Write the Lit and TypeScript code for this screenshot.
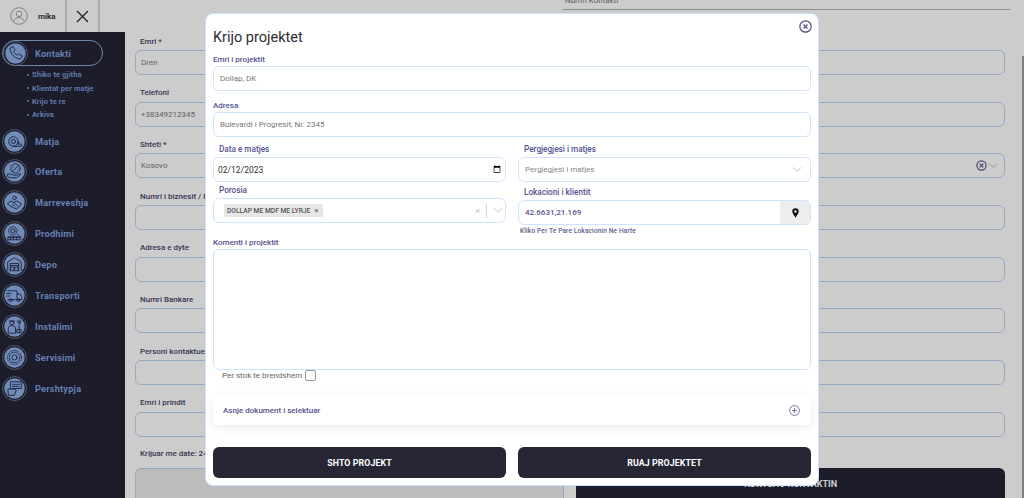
import { LitElement, html, css, svg } from "lit";
import { customElement } from "lit/decorators.js";

const glyphs: Record<string, unknown> = {
  Kontakti: svg`<path d="M7.6 6.4l2-1 2 3.2-1.3 1.3c.5 1.6 1.8 2.9 3.6 3.7l1.3-1.3 3.2 2-1 2.1c-.4.7-1.2 1-2 .8C10.800 16.100 7.800 13 6.700 8.400c-.2-.8.2-1.600.9-2z" />`,
  Matja: svg`<circle cx="11" cy="12" r="4.600"/><circle cx="11" cy="12" r="2"/><path d="M11 16.600h7.500v-2.200h-2.500M15.600 12.500v1.900"/>`,
  Oferta: svg`<circle cx="13" cy="9" r="4.500"/><path d="M10 12l6-6M11.300 7.800h.1M14.700 10.300h.1M5.500 14.500h3l2.500 1h3l3-1.500c.8-.3 1.300.6.600 1.200L14 18H8l-2.500-1z"/>`,
  Marreveshja: svg`<circle cx="12" cy="7.500" r="1.700"/><path d="M5.500 13l3-2.500 3 1.500 2.500-1.500 4.500 2.500-2 3-2.500 2-3-1-3.500-2zM10 13.500l2 2M12 12.500l2.500 2.500"/>`,
  Prodhimi: svg`<circle cx="10.500" cy="9.500" r="2"/><circle cx="10.500" cy="9.500" r="4" stroke-dasharray="1.600 1"/><path d="M15 13l3 2.500H6M6 15.500h12v2.500H6z"/><path d="M8 18v-2.500M11 18v-2.500M14 18v-2.500"/>`,
  Depo: svg`<path d="M5.500 18V9.500L12 5.500l6.500 4V18M8 18v-7h8v7M8 13h8"/><rect x="8.500" y="14.500" width="3" height="3.500"/><rect x="12.500" y="14.500" width="3" height="3.500"/>`,
  Transporti: svg`<path d="M5.500 7.500h9v8.500h-9M14.500 10.500h2.700l1.800 2.500v3h-4.500"/><circle cx="8.300" cy="16.500" r="1.400"/><circle cx="15.800" cy="16.500" r="1.400"/><path d="M4.500 10h4M4.500 12.500h3"/>`,
  Instalimi: svg`<circle cx="9.500" cy="8.500" r="2"/><path d="M6 18v-4.500c0-1.500 1.500-2.200 3.500-2.200s3.500.7 3.500 2.200V18zM7 6.800h5"/><path d="M16.500 6v3.500M15 6.500c0 1.500.7 2.500 1.500 3 .8-.5 1.500-1.500 1.500-3M16.500 11v7M14.500 15h4v3h-4z"/>`,
  Servisimi: svg`<circle cx="12" cy="12" r="2.500"/><circle cx="12" cy="12" r="5" stroke-dasharray="2 1.200"/><circle cx="12" cy="12" r="6.700" stroke-dasharray="1 1.500"/>`,
  Pershtypja: svg`<rect x="8.500" y="5.500" width="10" height="6.500"/><path d="M10 8h1M12 8h1M14 8h1M16 8h1M10 10h6M6 12.500h6.500l1 1.500-1.500 4.500H6.500z"/>`,
};

const navItems = ["Matja", "Oferta", "Marreveshja", "Prodhimi", "Depo", "Transporti", "Instalimi", "Servisimi", "Pershtypja"];
const subItems = ["Shiko te gjitha", "Klientat per matje", "Krijo te re", "Arkiva"];
const leftFields = [
  ["Emri *", "Dren"],
  ["Telefoni", "+38349212345"],
  ["Shteti *", "Kosovo"],
  ["Numri i biznesit / Personal", ""],
  ["Adresa e dyte", ""],
  ["Numri Bankare", ""],
  ["Personi kontaktues", ""],
  ["Emri i prindit", ""],
];

const navIcon = (name: string) => html`
  <svg class="nav-icon" viewBox="0 0 24 24" aria-hidden="true">
    <circle class="ring" cx="12" cy="12" r="11.500" />
    <circle class="disc" cx="12" cy="12" r="9.800" />
    <g class="glyph">${glyphs[name]}</g>
  </svg>`;

const chevron = html`<svg class="chev" viewBox="0 0 12 8" aria-hidden="true"><path d="M1 1.500l5 4.500 5-4.500" /></svg>`;

@customElement("app-root")
export class AppRoot extends LitElement {
  static styles = css`
    :host {
      display: block;
      position: relative;
      width: 1024px;
      height: 498px;
      overflow: hidden;
      background: #fff;
      font-family: Roboto, "Liberation Sans", sans-serif;
      color: #54528f;
    }
    * { box-sizing: border-box; }
    .page { display: grid; grid-template-columns: 125px 1fr; grid-template-rows: 32px 1fr; height: 498px; }
    .top { grid-column: 1 / 3; display: flex; height: 32px; position: relative; }
    .user { width: 67px; display: flex; align-items: center; gap: 10px; padding-left: 10px; border-right: 2px solid #d8d8d8; }
    .user svg { width: 18px; height: 18px; flex: none; }
    .user span { font-size: 8px; font-weight: 700; color: #333; }
    .x { width: 33px; display: flex; align-items: center; justify-content: center; border-right: 2px solid #d8d8d8; }
    .x svg { width: 13px; height: 13px; }
    .top-right { margin-left: 462px; width: 448px; height: 10px; border-bottom: 1px solid #b5b5b5; font-size: 8px; line-height: 1px; color: #777; display: flex; justify-content: space-between; padding: 0 3px; }
    .side { background: #232335; padding: 8px 0 0 2px; display: flex; flex-direction: column; }
    .pill { width: 101px; height: 26px; border: 1px solid #8faad4; border-radius: 13px; display: flex; align-items: center; gap: 7px; }
    .name { font-size: 9.200px; font-weight: 700; color: #7e9fdc; letter-spacing: 0.200px; }
    .nav-icon { width: 25px; height: 25px; flex: none; }
    .ring { fill: none; stroke: #7f8ca8; stroke-width: 0.700; }
    .disc { fill: #8db0e8; }
    .glyph { fill: none; stroke: #232845; stroke-width: 0.850; stroke-linejoin: round; stroke-linecap: round; }
    .subs { list-style: none; margin: 2px 0 7px 25px; padding: 0; display: flex; flex-direction: column; }
    .subs li { height: 13.400px; display: flex; align-items: center; gap: 3px; font-size: 7.500px; font-weight: 600; color: #7e9fdc; letter-spacing: 0.100px; }
    .subs li::before { content: ""; width: 2px; height: 2px; border-radius: 50%; background: #7e9fdc; }
    .nav { display: flex; flex-direction: column; gap: 5.900px; }
    .nav-row { height: 25px; display: flex; align-items: center; gap: 8px; }
    .form { padding: 0 19px 0 10px; display: grid; grid-template-columns: 429px 429px; column-gap: 12px; align-content: start; position: relative; }
    .col { display: flex; flex-direction: column; padding-top: 4px; }
    .f { height: 51.700px; display: flex; flex-direction: column; }
    .f label { height: 14px; padding: 0 0 4px 5px; font-size: 8px; font-weight: 500; color: #45456b; display: flex; align-items: center; white-space: nowrap; }
    .box { height: 25px; border: 1px solid #bcd2f5; border-radius: 6px; display: flex; align-items: center; justify-content: space-between; padding: 0 6px 0 5px; font-size: 8px; color: #7a7a7a; }
    .created { font-size: 8px; font-weight: 500; color: #45456b; height: 16px; margin-top: -1px; padding-left: 5px; }
    .grey-box { height: 40px; border: 1px solid #bcd2f5; border-radius: 6px; background: #ececec; margin-top: 3px; }
    .big-btn { height: 40px; background: #232335; border-radius: 6px; color: #fff; font-size: 9px; font-weight: 700; display: flex; justify-content: center; padding-top: 11px; margin-top: 18px; }
    .mini-x { width: 11px; height: 11px; stroke-width: 1.300; }
    .box-right { display: flex; align-items: center; gap: 1px; }
    .bar { position: absolute; right: 0; top: 24px; bottom: 0; width: 2px; background: #a0a0a0; }

    .overlay { position: absolute; inset: 0; background: rgba(0, 0, 0, 0.2); }
    .modal {
      position: absolute; left: 205px; top: 13px; width: 614px; height: 473px;
      background: #fff; border: 1px solid #cfe2ff; border-radius: 8px;
      padding: 6px 7px 0 7px; display: flex; flex-direction: column;
    }
    .m-head { display: flex; justify-content: flex-end; height: 9px; margin-right: -1px; }
    .m-head svg { width: 13px; height: 13px; flex: none; }
    h1 { margin: 0; font-size: 14.500px; font-weight: 400; color: #2c2c33; line-height: 18px; height: 18px; }
    .m-label { display: block; height: 12px; font-size: 8px; font-weight: 500; color: #54528f; line-height: 12px; white-space: nowrap; }
    .m-input { display: block; width: 100%; height: 25px; border: 1px solid #cfe2ff; border-radius: 6px; padding: 0 6px; font: 400 8px Roboto, sans-serif; color: #777; background: #fff; outline: none; }
    .f1 { margin-top: 7px; }
    .f2 { margin-top: 9px; }
    .grid { display: grid; grid-template-columns: 293px 293px; column-gap: 12px; margin-top: 5px; }
    .c { display: flex; flex-direction: column; }
    .c .m-label { padding-left: 6px; height: 15px; line-height: 14px; font-size: 8.200px; }
    .c .m-label.l-por { margin-top: 1px; }
    .c .m-label.l-loc { margin-top: 3px; }
    .date { color: #333; font-size: 8.500px; padding: 0 2px 0 4px; }
    .date::-webkit-datetime-edit-text { padding: 0; }
    .date::-webkit-datetime-edit-month-field,
    .date::-webkit-datetime-edit-day-field,
    .date::-webkit-datetime-edit-year-field { padding: 0; }
    .select { display: flex; align-items: center; justify-content: space-between; padding: 0 8px 0 6px; color: #888; }
    .chev { width: 10px; height: 7px; fill: none; stroke: #b9b9b9; stroke-width: 1; }
    .porosia { display: flex; align-items: center; padding: 0 2px 0 10px; }
    .tag { height: 13px; background: #e6e6e6; border-radius: 2px; padding: 0 4px 0 3px; display: flex; align-items: center; gap: 4px; font-size: 6.700px; font-weight: 500; color: #555; white-space: nowrap; }
    .tag b { font-weight: 400; font-size: 8px; }
    .porosia .tools { margin-left: auto; display: flex; align-items: center; gap: 6px; color: #c4c4c4; font-size: 9px; }
    .porosia .sep { width: 1px; height: 14px; background: #d4d4d4; }
    .loc { display: flex; height: 25px; border: 1px solid #cfe2ff; border-radius: 6px; overflow: hidden; }
    .loc span { flex: 1; display: flex; align-items: center; padding-left: 6px; font-size: 8px; font-weight: 500; color: #54528f; }
    .loc i { width: 30px; background: #ededed; display: flex; align-items: center; justify-content: center; }
    .loc svg { width: 7px; height: 10px; }
    .hint { font-size: 6.500px; font-weight: 500; padding-left: 2px; color: #5c5c8c; margin-top: 2px; letter-spacing: 0.150px; line-height: 9px; }
    .kom { margin-top: 1px; }
    .ta { height: 121px; border: 1px solid #cfe2ff; border-radius: 6px; }
    .stock { display: flex; align-items: center; gap: 3px; padding-left: 9px; height: 11px; font-size: 8px; color: #666; }
    .check { width: 11px; height: 11px; border: 1px solid #999; border-radius: 2px; }
    .doc { margin-top: 14px; height: 30px; border-radius: 6px; box-shadow: 0 3px 8px rgba(90, 100, 130, 0.12); display: flex; align-items: center; justify-content: space-between; padding: 0 11px 0 10px; font-size: 8px; font-weight: 500; color: #54528f; }
    .doc svg { width: 11px; height: 11px; }
    .actions { margin-top: 22px; display: grid; grid-template-columns: 293px 293px; column-gap: 12px; }
    .actions button { height: 31px; border: 0; border-radius: 6px; background: #262635; color: #fff; font: 700 8.800px Roboto, sans-serif; letter-spacing: 0.100px; }
  `;

  render() {
    return html`
      <div class="page">
        <header class="top">
          <div class="user">
            <svg viewBox="0 0 18 18" fill="none" stroke="#8c8c8c" stroke-width="0.800" aria-hidden="true">
              <circle cx="9" cy="9" r="8.300" /><circle cx="9" cy="6.800" r="2.800" />
              <path d="M3.800 14.500c.6-2.700 2.600-3.900 5.200-3.900s4.600 1.200 5.200 3.900" />
            </svg>
            <span>mika</span>
          </div>
          <div class="x">
            <svg viewBox="0 0 13 13" stroke="#222" stroke-width="1.200" aria-hidden="true"><path d="M1 1l11 11M12 1L1 12" /></svg>
          </div>
          <div class="top-right"><span>Numri Kontakti</span></div>
        </header>
        <aside class="side">
          <div class="pill">${navIcon("Kontakti")}<span class="name">Kontakti</span></div>
          <ul class="subs">${subItems.map((s) => html`<li>${s}</li>`)}</ul>
          <nav class="nav">
            ${navItems.map((n) => html`<div class="nav-row">${navIcon(n)}<span class="name">${n}</span></div>`)}
          </nav>
        </aside>
        <main class="form">
          <div class="col">
            ${leftFields.map(([l, v]) => html`<div class="f"><label>${l}</label><div class="box">${v}</div></div>`)}
            <div class="created">Krijuar me date: 24/11/2023</div>
            <div class="grey-box"></div>
          </div>
          <div class="col">
            ${[0, 1].map(() => html`<div class="f"><label></label><div class="box"></div></div>`)}
            <div class="f"><label></label><div class="box"><span></span><span class="box-right">
              <svg class="mini-x" viewBox="0 0 12 12" fill="none" stroke="#54528f" aria-hidden="true"><circle cx="6" cy="6" r="5" /><path d="M4 4l4 4M8 4l-4 4" /></svg>${chevron}
            </span></div></div>
            ${[0, 1, 2, 3, 4].map(() => html`<div class="f"><label></label><div class="box"></div></div>`)}
            <div class="big-btn">NDRYSHO KONTAKTIN</div>
          </div>
          <div class="bar"></div>
        </main>
      </div>
      <div class="overlay"></div>
      <section class="modal">
        <div class="m-head">
          <svg viewBox="0 0 13 13" fill="none" stroke="#4f4d85" stroke-width="1.200" aria-hidden="true"><circle cx="6.500" cy="6.500" r="5.700" /><path d="M4.500 4.500l4 4M8.500 4.500l-4 4" /></svg>
        </div>
        <h1>Krijo projektet</h1>
        <div class="f1"><label class="m-label">Emri i projektit</label><input class="m-input" .value=${"Dollap, DK"} /></div>
        <div class="f2"><label class="m-label">Adresa</label><input class="m-input" .value=${"Bulevardi i Progresit, Nr. 2345"} /></div>
        <div class="grid">
          <div class="c">
            <label class="m-label">Data e matjes</label>
            <input class="m-input date" type="date" value="2023-02-12" />
            <label class="m-label l-por">Porosia</label>
            <div class="m-input porosia">
              <span class="tag">DOLLAP ME MDF ME LYRJE <b>×</b></span>
              <span class="tools"><span>×</span><span class="sep"></span>${chevron}</span>
            </div>
          </div>
          <div class="c">
            <label class="m-label">Pergjegjesi i matjes</label>
            <div class="m-input select"><span>Pergjegjesi i matjes</span>${chevron}</div>
            <label class="m-label l-loc">Lokacioni i klientit</label>
            <div class="loc"><span>42.6631,21.169</span><i>
              <svg viewBox="0 0 8 11" aria-hidden="true"><path fill="#111" fill-rule="evenodd" d="M4 0a3.700 3.700 0 0 1 3.700 3.700C7.700 6 5 8.800 4 11 3 8.800.300 6 .300 3.700A3.700 3.700 0 0 1 4 0zm0 2.300a1.400 1.400 0 1 0 0 2.800 1.400 1.400 0 0 0 0-2.800z" /></svg>
            </i></div>
            <div class="hint">Kliko Per Te Pare Lokacionin Ne Harte</div>
          </div>
        </div>
        <div class="kom"><label class="m-label">Komenti i projektit</label><div class="ta"></div></div>
        <div class="stock">Per stok te brendshem <span class="check"></span></div>
        <div class="doc">
          <span>Asnje dokument i selektuar</span>
          <svg viewBox="0 0 11 11" fill="none" stroke="#54528f" stroke-width="0.800" aria-hidden="true"><circle cx="5.500" cy="5.500" r="4.900" /><path d="M5.500 3v5M3 5.500h5" /></svg>
        </div>
        <div class="actions"><button>SHTO PROJEKT</button><button>RUAJ PROJEKTET</button></div>
      </section>
    `;
  }
}
